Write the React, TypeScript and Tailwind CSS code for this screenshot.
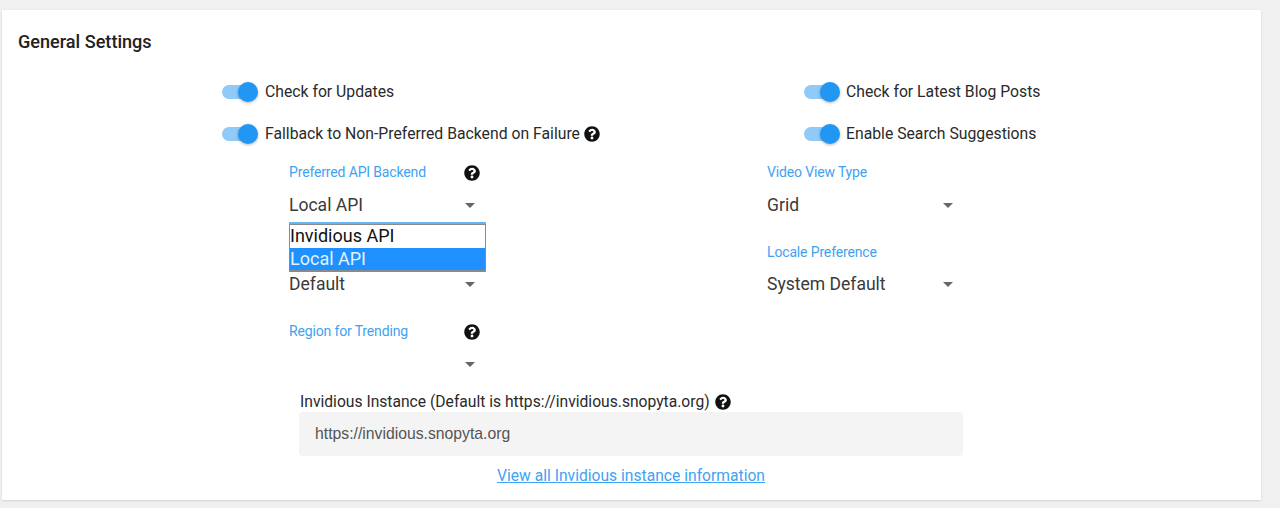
import { FaQuestionCircle } from "react-icons/fa";

function Toggle({ label, help, tight }: { label: string; help?: boolean; tight?: boolean }) {
  return (
    <div className="flex h-[42px] items-center">
      <div className="relative h-[20px] w-[36px] shrink-0">
        <div className="absolute left-0 top-[3px] h-[14px] w-[30px] rounded-full bg-[#90caf9]" />
        <div className="absolute right-0 top-0 h-[20px] w-[20px] rounded-full bg-[#2196f3] shadow-[0_1px_3px_rgba(0,0,0,0.3)]" />
      </div>
      <span className={tight ? "ml-[6px] text-[15.75px] leading-5 text-[#2a2a2a]" : "ml-[7px] text-[15.75px] leading-5 text-[#2a2a2a]"}>
        {label}
      </span>
      {help && <FaQuestionCircle className="ml-[4px] text-[16px] text-[#111]" />}
    </div>
  );
}

function Select({ label, value, help }: { label: string; value: string; help?: boolean }) {
  return (
    <div className="h-[79.5px] w-[192px]">
      <div className="relative flex h-[20px] items-center">
        <span className="text-[14px] leading-5 tracking-[-0.15px] text-[#3fa2f2]">{label || "\u00a0"}</span>
        {help && <FaQuestionCircle className="absolute left-[174.5px] top-[3px] text-[16px] text-[#111]" />}
      </div>
      <div className="relative mt-[10.5px] flex h-[24px] items-center">
        <span className="text-[17.55px] leading-6 text-[#3a3a3a]">{value}</span>
        <div className="absolute left-[176px] top-[10px] h-0 w-0 border-x-[5px] border-t-[5px] border-x-transparent border-t-[#666]" />
      </div>
    </div>
  );
}

export default function App() {
  return (
    <div className="h-[508px] overflow-hidden bg-[#f0f0f0] pl-[2px] pt-[10px] font-['Roboto',sans-serif]">
      <div className="relative h-[490px] w-[1259px] bg-white shadow-[0_1px_2px_rgba(0,0,0,0.12)]">
        <h2 className="pl-[16px] pt-[21px] text-[18.1px] font-medium leading-[22px] text-[#212121]">General Settings</h2>

        <div className="mt-[18px] flex pl-[220px]">
          <div className="w-[582px]">
            <Toggle label="Check for Updates" />
            <Toggle label="Fallback to Non-Preferred Backend on Failure" help />
          </div>
          <div>
            <Toggle label="Check for Latest Blog Posts" tight />
            <Toggle label="Enable Search Suggestions" tight />
          </div>
        </div>

        <div className="mt-[7px] flex pl-[287px]">
          <div className="relative w-[478px]">
            <Select label="Preferred API Backend" value="Local API" help />
            <Select label="" value="Default" />
            <Select label="Region for Trending" value="" help />
            <div className="absolute left-0 top-[60px] w-[197px] border-t-2 border-[#64b5f6] bg-white text-[18px] leading-[22.5px]">
              <div className="border border-b-2 border-[#8a8a8a]">
                <div className="text-[#111]">Invidious API</div>
                <div className="bg-[#1e90ff] text-[#e3f2fd]">Local API</div>
              </div>
            </div>
          </div>
          <div>
            <Select label="Video View Type" value="Grid" />
            <Select label="Locale Preference" value="System Default" />
          </div>
        </div>

        <div className="ml-[297px] w-[664px] -mt-[9px]">
          <div className="flex h-[20px] items-center pl-[1px] text-[15.65px] leading-5 text-[#2a2a2a]">
            Invidious Instance (Default is https://invidious.snopyta.org)
            <FaQuestionCircle className="ml-[5px] text-[16px] text-[#111]" />
          </div>
          <div className="flex h-[44px] items-center rounded-[4px] bg-[#f4f4f4] pl-[16px] font-['Liberation_Sans',sans-serif] text-[15.75px] text-[#555]">
            https://invidious.snopyta.org
          </div>
          <div className="mt-[10px] text-center text-[15.65px] leading-5">
            <a className="text-[#3fa2f2] underline">View all Invidious instance information</a>
          </div>
        </div>
      </div>
    </div>
  );
}
